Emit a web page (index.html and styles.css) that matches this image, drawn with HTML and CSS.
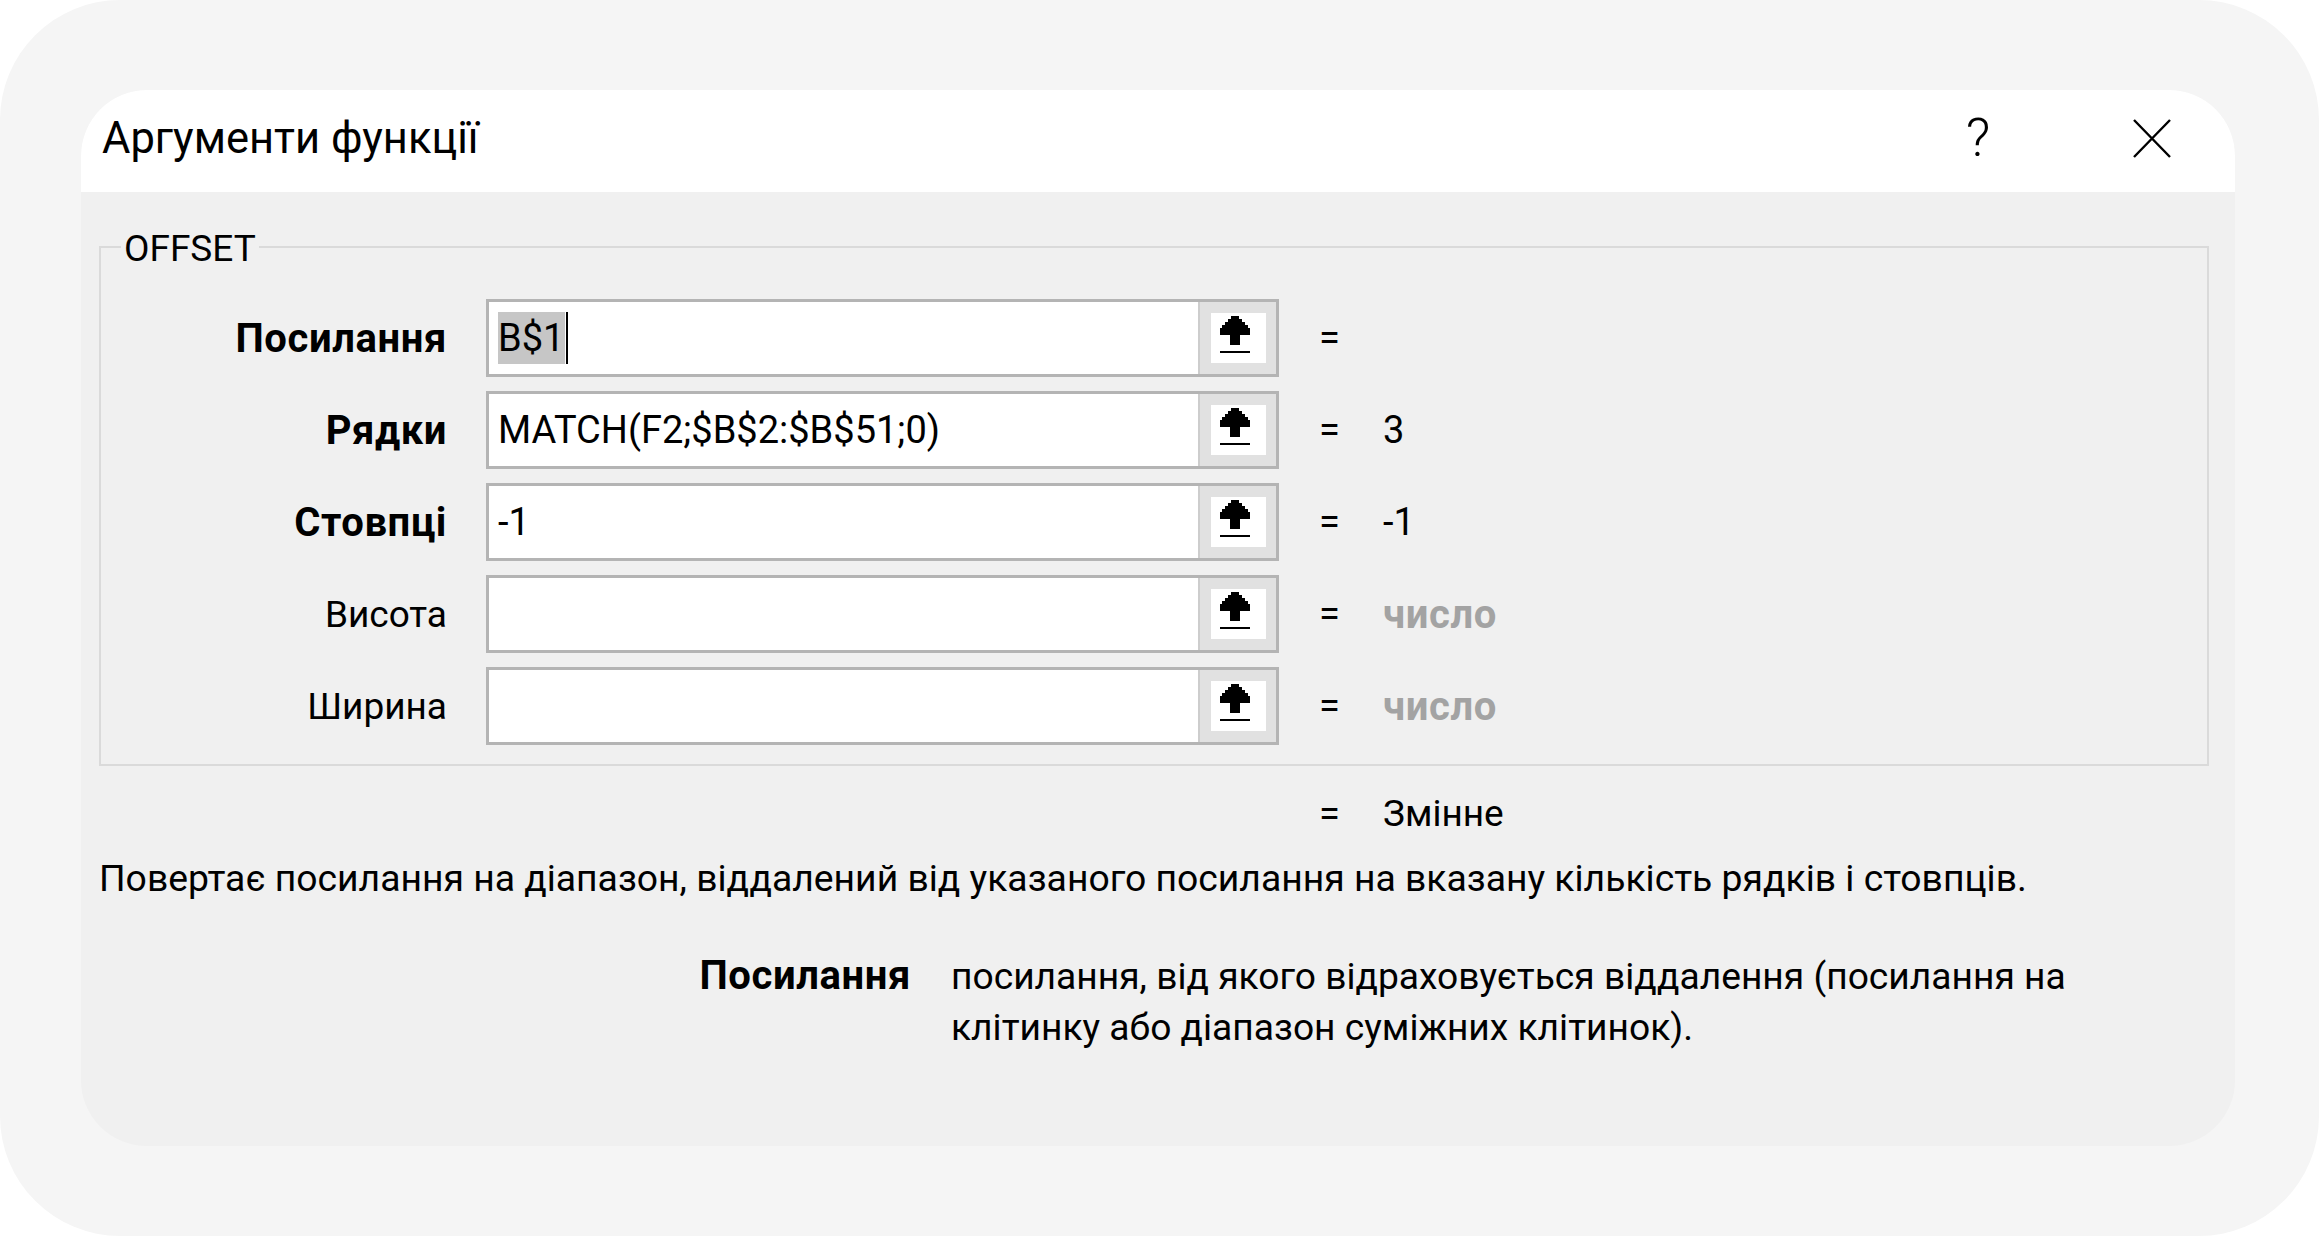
FILE: index.html
```html
<!DOCTYPE html>
<html lang="uk">
<head>
<meta charset="utf-8">
<title>Аргументи функції</title>
<link rel="stylesheet" href="styles.css">
</head>
<body>
<div class="frame">
  <div class="dialog">
    <div class="titlebar">
      <span class="title">Аргументи функції</span>
      <span class="help">?</span>
      <span class="close">
        <svg width="38" height="39" viewBox="0 0 38 39"><path d="M1 1 L37 38 M37 1 L1 38" stroke="#000" stroke-width="2.4" fill="none"/></svg>
      </span>
    </div>
    <div class="content">
      <div class="groupbox">
        <div class="group-title">OFFSET</div>
        <div class="args">
          <div class="arg-label bold">Посилання</div>
          <div class="field">
            <div class="field-text"><span class="sel">B$1</span><span class="caret"></span></div>
            <div class="ref-btn"><span class="ref-icon"><svg width="31" height="38" viewBox="0 0 31 38" shape-rendering="crispEdges"><path d="M11 0 H19 V3 H22 V6 H25 V9 H28 V12 H30 V19 H20 V29 H10 V19 H0 V12 H2 V9 H5 V6 H8 V3 H11 Z" fill="#000"/><rect x="0" y="35" width="30" height="2" fill="#000"/></svg></span></div>
          </div>
          <div class="eq">=</div>
          <div class="val"></div>

          <div class="arg-label bold">Рядки</div>
          <div class="field">
            <div class="field-text">MATCH(F2;$B$2:$B$51;0)</div>
            <div class="ref-btn"><span class="ref-icon"><svg width="31" height="38" viewBox="0 0 31 38" shape-rendering="crispEdges"><path d="M11 0 H19 V3 H22 V6 H25 V9 H28 V12 H30 V19 H20 V29 H10 V19 H0 V12 H2 V9 H5 V6 H8 V3 H11 Z" fill="#000"/><rect x="0" y="35" width="30" height="2" fill="#000"/></svg></span></div>
          </div>
          <div class="eq">=</div>
          <div class="val">3</div>

          <div class="arg-label bold">Стовпці</div>
          <div class="field">
            <div class="field-text">-1</div>
            <div class="ref-btn"><span class="ref-icon"><svg width="31" height="38" viewBox="0 0 31 38" shape-rendering="crispEdges"><path d="M11 0 H19 V3 H22 V6 H25 V9 H28 V12 H30 V19 H20 V29 H10 V19 H0 V12 H2 V9 H5 V6 H8 V3 H11 Z" fill="#000"/><rect x="0" y="35" width="30" height="2" fill="#000"/></svg></span></div>
          </div>
          <div class="eq">=</div>
          <div class="val">-1</div>

          <div class="arg-label">Висота</div>
          <div class="field">
            <div class="field-text"></div>
            <div class="ref-btn"><span class="ref-icon"><svg width="31" height="38" viewBox="0 0 31 38" shape-rendering="crispEdges"><path d="M11 0 H19 V3 H22 V6 H25 V9 H28 V12 H30 V19 H20 V29 H10 V19 H0 V12 H2 V9 H5 V6 H8 V3 H11 Z" fill="#000"/><rect x="0" y="35" width="30" height="2" fill="#000"/></svg></span></div>
          </div>
          <div class="eq">=</div>
          <div class="val hint">число</div>

          <div class="arg-label">Ширина</div>
          <div class="field">
            <div class="field-text"></div>
            <div class="ref-btn"><span class="ref-icon"><svg width="31" height="38" viewBox="0 0 31 38" shape-rendering="crispEdges"><path d="M11 0 H19 V3 H22 V6 H25 V9 H28 V12 H30 V19 H20 V29 H10 V19 H0 V12 H2 V9 H5 V6 H8 V3 H11 Z" fill="#000"/><rect x="0" y="35" width="30" height="2" fill="#000"/></svg></span></div>
          </div>
          <div class="eq">=</div>
          <div class="val hint">число</div>
        </div>
      </div>

      <div class="result"><span class="eq">=</span><span class="val">Змінне</span></div>
      <p class="desc">Повертає посилання на діапазон, віддалений від указаного посилання на вказану кількість рядків і стовпців.</p>
      <div class="arg-help">
        <div class="help-name">Посилання</div>
        <div class="help-text">посилання, від якого відраховується віддалення (посилання на клітинку або діапазон суміжних клітинок).</div>
      </div>
    </div>
  </div>
</div>
</body>
</html>
```

FILE: styles.css
```css
html, body {
  margin: 0;
  padding: 0;
  background: #ffffff;
}

body {
  font-family: Roboto, "Open Sans", "Noto Sans", sans-serif;
  color: #000;
}

.frame {
  width: 2319px;
  height: 1236px;
  box-sizing: border-box;
  background: #f5f5f5;
  border-radius: 120px;
  padding: 90px 0 0 81px;
}

.dialog {
  width: 2154px;
  height: 1056px;
  background: #f0f0f0;
  border-radius: 66px;
  overflow: hidden;
}

.titlebar {
  height: 102px;
  background: #ffffff;
  display: flex;
  align-items: center;
  padding-left: 21px;
  padding-right: 53px;
  box-sizing: border-box;
}

.title {
  font-size: 43.5px;
  line-height: 52px;
  padding-bottom: 4px;
}

.help {
  margin-left: auto;
  width: 60px;
  text-align: center;
  font-size: 54px;
  font-weight: 300;
  line-height: 60px;
  padding-bottom: 6px;
}

.close {
  width: 60px;
  margin-left: 114px;
  display: flex;
  justify-content: center;
  padding-bottom: 6px;
}

.content {
  padding: 0 18px;
}

.groupbox {
  margin: 54px 8px 0 0;
  border: 2px solid #dadada;
  padding: 0 0 19px 0;
}

.group-title {
  width: max-content;
  margin: -25px 0 0 20px;
  padding: 0 3px;
  background: #f0f0f0;
  font-size: 37px;
  line-height: 52px;
}

.args {
  margin-top: 24px;
  display: grid;
  grid-template-columns: 385px 793px 104px 1fr;
  grid-auto-rows: 78px;
  row-gap: 14px;
  align-items: center;
}

.arg-label {
  text-align: right;
  padding-right: 39px;
  font-size: 37px;
}

.bold {
  font-weight: 700;
  font-size: 40px;
  letter-spacing: 0.6px;
}

.field {
  height: 78px;
  box-sizing: border-box;
  border: 3px solid #b4b4b4;
  display: flex;
  background: #ffffff;
}

.field-text {
  flex: 1;
  display: flex;
  align-items: center;
  padding-left: 9px;
  font-size: 38px;
  white-space: nowrap;
}

.sel {
  display: inline-block;
  background: #c6c6c6;
  line-height: 52px;
  padding-right: 1px;
}

.caret {
  display: inline-block;
  width: 2px;
  height: 52px;
  background: #000;
  margin-left: 1px;
}

.ref-btn {
  width: 78px;
  box-sizing: border-box;
  background: #e1e1e1;
  border-left: 2px solid #cdcdcd;
  display: flex;
  align-items: center;
  justify-content: center;
}

.ref-icon {
  width: 55px;
  height: 50px;
  box-sizing: border-box;
  background: #ffffff;
  display: flex;
  padding: 3px 0 0 9px;
}

.eq {
  padding-left: 40px;
  font-size: 38px;
}

.val {
  font-size: 38px;
}

.hint {
  font-weight: 700;
  font-size: 40px;
  letter-spacing: 0.6px;
  color: #a3a3a3;
}

.result {
  margin-top: 23px;
  display: flex;
  line-height: 50px;
  padding-left: 1180px;
}

.result .eq {
  width: 64px;
}

.result .val {
  font-size: 37px;
}

.desc {
  margin: 14px 0 0 0;
  font-size: 37.3px;
  line-height: 50px;
  white-space: nowrap;
}

.arg-help {
  margin-top: 47px;
  display: grid;
  grid-template-columns: 812px 1160px;
  column-gap: 40px;
  align-items: baseline;
  line-height: 51px;
}

.help-name {
  text-align: right;
  font-weight: 700;
  font-size: 40px;
  letter-spacing: 0.6px;
}

.help-text {
  font-size: 37.2px;
}
```
